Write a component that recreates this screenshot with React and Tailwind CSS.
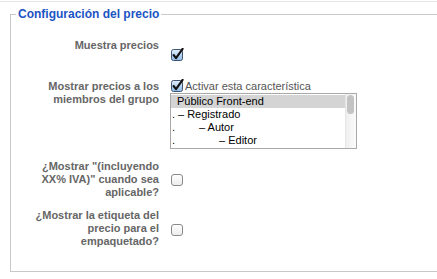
import React from "react";

function Checked() {
  return (
    <svg width="13" height="13" viewBox="0 0 13 13" className="block">
      <defs>
        <linearGradient id="cg" x1="0" y1="0" x2="0" y2="1">
          <stop offset="0" stopColor="#e2eefb" />
          <stop offset="1" stopColor="#8fbbe8" />
        </linearGradient>
      </defs>
      <rect x="0.5" y="1.5" width="11" height="11" rx="2" fill="url(#cg)" stroke="#3f5573" />
      <path d="M2.6 7 L5 10.2 L11.6 0.8" fill="none" stroke="#111" strokeWidth="2.1" strokeLinecap="round" strokeLinejoin="round" />
    </svg>
  );
}

function Unchecked() {
  return (
    <svg width="12" height="12" viewBox="0 0 12 12" className="block">
      <defs>
        <linearGradient id="ug" x1="0" y1="0" x2="0" y2="1">
          <stop offset="0" stopColor="#ffffff" />
          <stop offset="1" stopColor="#ececec" />
        </linearGradient>
      </defs>
      <rect x="0.5" y="0.5" width="11" height="11" rx="2.5" fill="url(#ug)" stroke="#8a8a8a" />
    </svg>
  );
}

function Label({ children }) {
  return (
    <div className="w-[148px] shrink-0 text-right text-[11px] leading-[13px] font-bold text-[#666]">
      {children}
    </div>
  );
}

export default function App() {
  return (
    <div className="w-[437px] h-[279px] overflow-hidden bg-white font-['Liberation_Sans',Arial,sans-serif]">
      <div className="mt-px h-px bg-[#e6e6e6]" />
      <fieldset className="mt-[4px] ml-[10px] w-[450px] h-[266px] border border-[#c9c9c9]">
        <legend className="ml-[5px] px-[2px] text-[12px] leading-[16px] font-bold text-[#1c54c4]">
          Configuración del precio
        </legend>

        <div className="mt-[17px] flex gap-[12px]">
          <Label>Muestra precios</Label>
          <div className="mt-[9px]">
            <Checked />
          </div>
        </div>

        <div className="mt-[19px] flex gap-[12px]">
          <Label>
            Mostrar precios a los
            <br />
            miembros del grupo
          </Label>
          <div className="flex flex-col">
            <div className="flex h-[13px] items-start gap-[1px] text-[11px] leading-[13px] text-[#555]">
              <div className="-mt-px">
                <Checked />
              </div>
              <span>Activar esta característica</span>
            </div>
            <div className="-ml-px flex h-[56px] w-[187px] border border-[#a9a9a9] bg-white text-[11px] leading-[13px] text-black">
              <div className="flex flex-1 flex-col pt-px">
                <div className="h-[13px] bg-[#d4d4d4] pl-[6px]">Público Front-end</div>
                <div className="h-[13px] pl-[1px]">
                  <span className="inline-block w-[6px]">.</span>– Registrado
                </div>
                <div className="h-[13px] pl-[1px]">
                  <span className="inline-block w-[27px]">.</span>– Autor
                </div>
                <div className="h-[13px] pl-[1px]">
                  <span className="inline-block w-[47px]">.</span>– Editor
                </div>
              </div>
              <div className="w-[11px] border-l border-[#e6e6e6] bg-gradient-to-r from-[#efefef] to-[#fbfbfb] pt-px">
                <div className="ml-[1px] h-[19px] w-[7px] rounded-full bg-[#c3c3c3]" />
              </div>
            </div>
          </div>
        </div>

        <div className="mt-[11px] flex items-center gap-[12px]">
          <Label>
            ¿Mostrar "(incluyendo
            <br />
            XX% IVA)" cuando sea
            <br />
            aplicable?
          </Label>
          <Unchecked />
        </div>

        <div className="mt-[10px] flex items-center gap-[12px]">
          <Label>
            ¿Mostrar la etiqueta del
            <br />
            precio para el
            <br />
            empaquetado?
          </Label>
          <div className="mt-[3px]">
            <Unchecked />
          </div>
        </div>
      </fieldset>
    </div>
  );
}
